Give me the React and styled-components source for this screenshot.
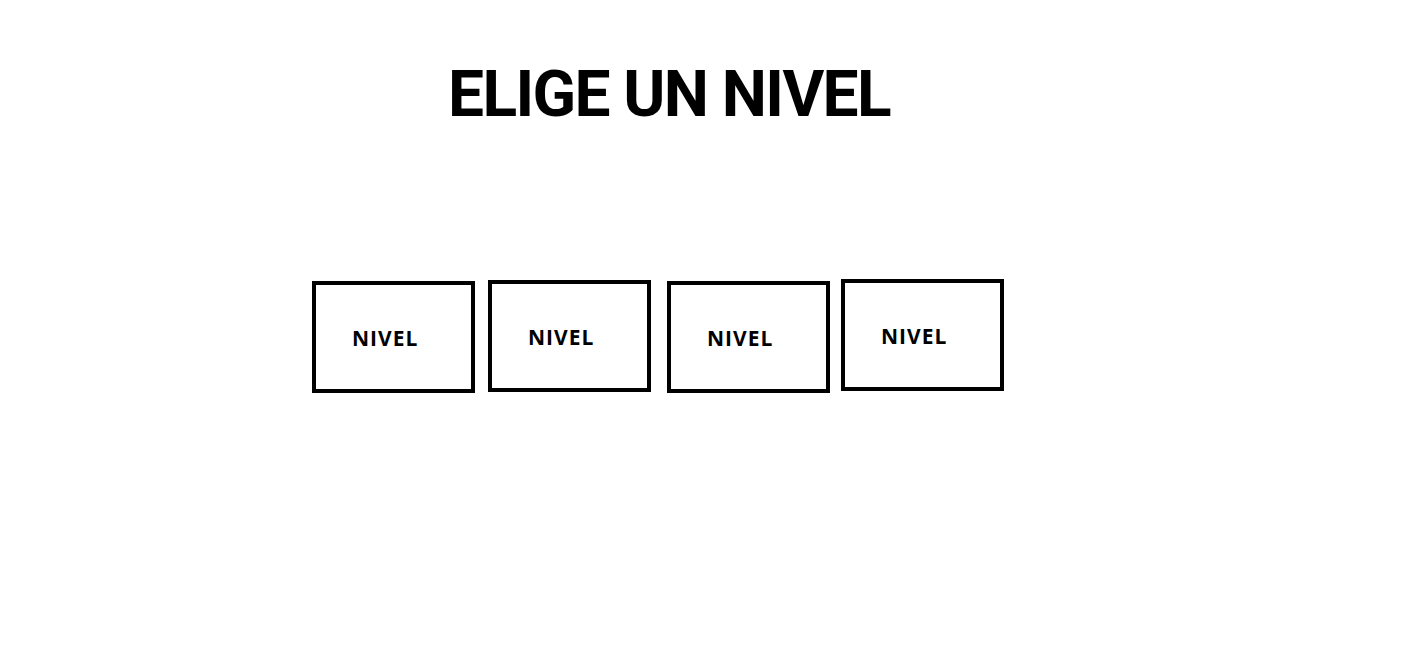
import React from "react";
import styled, { createGlobalStyle } from "styled-components";

const Global = createGlobalStyle`
  html, body { margin: 0; padding: 0; background: #fff; }
  body { font-family: "Open Sans", "Noto Sans", sans-serif; color: #000; }
`;

const Page = styled.main`
  display: flex;
  flex-direction: column;
  padding: 55px 0 0 312px;
  width: 1410px;
  height: 663px;
  box-sizing: border-box;
`;

const Title = styled.h1`
  margin: 0 0 0 136px;
  font-family: Roboto, "Open Sans", sans-serif;
  font-size: 64px;
  line-height: 80px;
  font-weight: 700;
  letter-spacing: -1.6px;
`;

const Row = styled.div`
  display: flex;
  align-items: flex-start;
  gap: 13px;
  margin-top: 145px;
`;

const LevelBox = styled.button`
  box-sizing: border-box;
  width: 163px;
  height: 112px;
  border: 4px solid #000;
  background: #fff;
  padding: 2px 0 0 36px;
  margin-top: ${(p) => p.$dy}px;
  margin-left: ${(p) => p.$dx}px;
  display: flex;
  align-items: center;
  font-family: "Open Sans", "Noto Sans", sans-serif;
  font-size: 21px;
  font-weight: 700;
  letter-spacing: 1px;
  color: #000;
  cursor: pointer;
`;

const levels = [
  { dx: 0, dy: 1 },
  { dx: 0, dy: 0 },
  { dx: 3, dy: 1 },
  { dx: -2, dy: -1 },
];

export default function App() {
  return (
    <>
      <Global />
      <Page>
        <Title>ELIGE UN NIVEL</Title>
        <Row>
          {levels.map((l, i) => (
            <LevelBox key={i} $dx={l.dx} $dy={l.dy}>NIVEL</LevelBox>
          ))}
        </Row>
      </Page>
    </>
  );
}
